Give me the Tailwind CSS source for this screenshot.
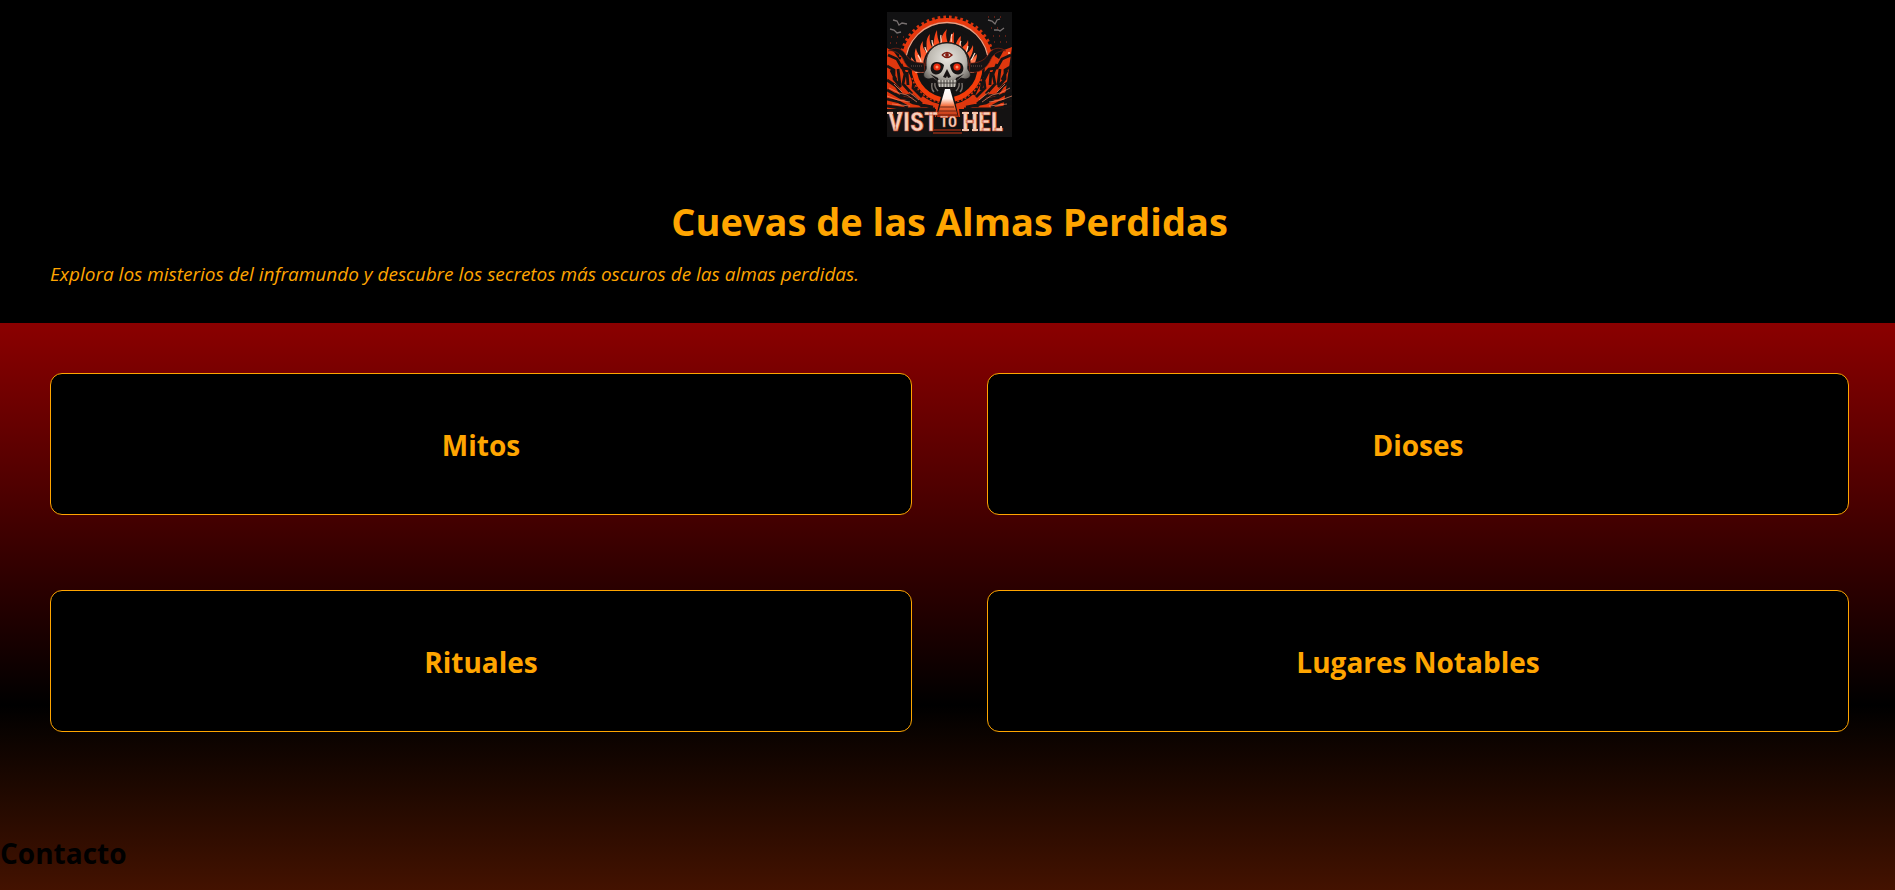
<!DOCTYPE html>
<html lang="es">
<head>
<meta charset="utf-8">
<meta name="viewport" content="width=device-width, initial-scale=1">
<title>Cuevas de las Almas Perdidas</title>
<script src="https://cdn.jsdelivr.net/npm/@tailwindcss/browser@4"></script>
</head>
<body class="flex min-h-screen flex-col bg-black font-['Segoe_UI','Open_Sans',sans-serif] text-black">
<header class="bg-black pt-3 pr-[46px] pb-[34px] pl-[50px] text-[orange]">
  <svg class="mx-auto block size-[125px]" viewBox="0 0 125 125" role="img" aria-label="Vist to Hel">
    <defs>
      <linearGradient id="beam" x1="0" y1="0" x2="0" y2="1"><stop offset="0" stop-color="#fff"/><stop offset=".35" stop-color="#fff0e8"/><stop offset=".6" stop-color="#f4703f"/><stop offset="1" stop-color="#b92b0b"/></linearGradient>
      <radialGradient id="bone" cx=".5" cy=".35" r=".65"><stop offset="0" stop-color="#e8e6e0"/><stop offset=".6" stop-color="#bcb8b0"/><stop offset="1" stop-color="#5f5b56"/></radialGradient>
      <linearGradient id="fire" x1="0" y1="0" x2="0" y2="1"><stop offset="0" stop-color="#f03a10"/><stop offset=".6" stop-color="#ff5a2c"/><stop offset="1" stop-color="#ffc4a4"/></linearGradient>
      <clipPath id="frame"><rect width="125" height="125"/></clipPath>
    </defs>
    <g clip-path="url(#frame)">
      <rect width="125" height="125" fill="#121213"/>
      <circle cx="60" cy="52" r="46" fill="none" stroke="#d8340d" stroke-width="5" stroke-dasharray="2.600 3"/>
      <circle cx="60" cy="52" r="44" fill="none" stroke="#e8380d" stroke-width="4"/>
      <circle cx="60" cy="52" r="41.500" fill="#131212" stroke="#f0a084" stroke-width="1.300"/>
      <!-- mountains -->
      <path fill="#df370e" d="M0 36l7 4 6 8 4-6 8 8 5 7 6 13 7 14 14 9v12H0zM125 35l-8 3-5 9-6-4-8 10-6 7-7 14-9 10-12 9v12h51z"/>
      <g fill="none" stroke="#171313" stroke-width="2.800">
        <path d="M1 43l9 4 5 9 8 1 7 8M0 54l7 4v9l7 8M14 52l4 10-2 10 9 10M0 68l9 6 6 9 11 1 9 8M22 58l5 10-1 8 9 9M0 78l14 8 11 1 10 7M0 87l12 3 9 5M4 58l5 10M11 57l2 16M20 60l1 13M28 66l2 12M33 74l4 9M0 94l20 3 28 0M8 82l18 9 20 4"/>
        <path d="M124 43l-9 4-5 9-8 1-7 8M125 54l-7 4v9l-7 8M110 52l-4 10 2 10-9 10M125 68l-9 6-6 9-11 1-9 8M102 58l-5 10 1 8-9 9M125 78l-14 8-11 1-10 7M125 87l-12 3-9 5M120 58l-5 10M113 57l-2 16M104 60l-1 13M96 66l-2 12M91 74l-4 9M125 94l-20 3-28 0M117 82l-18 9-20 4"/>
      </g>
      <g fill="none" stroke="#f38b69" stroke-width=".7">
        <path d="M2 76l10 5 8 2 10 7M0 84l11 4 12 2M7 72l8 8M22 80l10 8M5 92l18 2M123 76l-10 5-8 2-10 7M125 84l-11 4-12 2M118 72l-8 8M102 80l-10 8M120 92l-18 2"/>
      </g>
      <!-- lower glow and flames around the skull -->
      <circle cx="60" cy="55" r="38" fill="#131212"/>
      <path fill="none" stroke="#f33c0a" stroke-width="5" d="M27 55a33 33 0 0 0 66 0"/>
      <path fill="none" stroke="#d2350f" stroke-width="1.500" stroke-dasharray="2 2" d="M25 66a37 37 0 0 0 70 0"/>
      <path fill="url(#fire)" d="M29 61c-7-5-4-10-5-16 3 3 4 6 6 8-1-6-4-10-1-17 1 5 3 7 5 10 0-7-3-11 2-17-1 6 1 8 3 11 2-5-2-12 4-18-1 6 0 9 2 13 3-5 1-10 5-17 0 6 1 10 3 14 1-5 2-10 7-15-2 7 0 10 1 15 3-4 2-8 6-12 0 6-1 9 1 14 2-5 3-8 6-10-1 5 0 8 1 12 2-3 5-4 6-8 1 6-1 9-1 13 3-2 4-4 6-8 1 8-3 11-4 16 3-2 5-4 8-7 0 7-4 9-3 19z"/>
      <path fill="none" stroke="#ffe1cc" stroke-width="1.200" d="M31 43c1 3 3 4 3 7M38 35c0 4 3 5 3 8M45 28c0 5 2 6 2 9M54 23c-1 4 1 6 0 8M65 22c-2 4 0 6-1 8M74 29c-2 3 0 6-2 8M81 34c-1 4-1 6-3 7M88 41c-2 3-2 5-4 7"/>
      <circle cx="60" cy="54" r="24" fill="#181515"/>
      <path fill="none" stroke="#8d2a18" stroke-width="1" d="M38 54a22 22 0 0 1 44 0"/>
      <!-- horns -->
      <g fill="#161314" stroke="#8a2512" stroke-width=".7">
        <path d="M38 60c-9 2-18-3-22-13-3-6-9-9-15-8 7-5 14-3 18 4 4 6 10 8 18 8z"/>
        <path d="M82 60c9 2 18-3 22-13 3-6 9-9 15-8-7-5-14-3-18 4-4 6-10 8-18 8z"/>
      </g>
      <path stroke="#4d3a36" stroke-width="2" stroke-dasharray=".8 1.200" d="M24 54h12M84 54h12"/>
      <!-- bats and embers -->
      <path fill="none" stroke="#777070" stroke-width="1.300" d="M6 8l4 1 2 4 3-2 5 1M3 17l4 1 3 3 4-1M101 8l4 1 3 3 2-4 3-1M107 18l4 0 2 1 4-3"/>
      <path fill="none" stroke="#ae2d18" stroke-width="1.200" stroke-dasharray="1 5" d="M4 25h16M3 31h12M104 16h7M106 24h16M107 30h16M101 5h15"/>
      <circle cx="122" cy="41" r="1" fill="#ffc19c"/>
      <!-- skull -->
      <path fill="url(#bone)" stroke="#151313" stroke-width=".8" d="M60 31c-13 0-21 9-21 20 0 4 1 6-1 8-3 4-1 8 4 8l4-1 4 3 1 6h18l1-6 4-3 4 1c5 0 7-4 4-8-2-2-1-4-1-8 0-11-8-20-21-20z"/>
      <path fill="#171313" d="M44 54c2-6 10-4 13-1-1 7-5 11-10 9-3-1-4-5-3-8zM76 54c-2-6-10-4-13-1 1 7 5 11 10 9 3-1 4-5 3-8zM60 57l4 8-3 1-1-2-1 2-3-1zM43 62l8 4 1 4zM77 62l-8 4-1 4z"/>
      <circle cx="50" cy="55" r="3.600" fill="#e92a0c"/><circle cx="50" cy="55" r="1.500" fill="#ff9068"/>
      <circle cx="70" cy="55" r="3.600" fill="#e92a0c"/><circle cx="70" cy="55" r="1.500" fill="#ff9068"/>
      <path fill="none" stroke="#7c1a10" stroke-width="1.400" d="M55 43q5-5 10 0q-5 5-10 0"/><circle cx="60" cy="43" r="1.900" fill="#87180e"/>
      <path fill="#c5c1b9" d="M51 68h18l-1 7H52z"/>
      <path fill="none" stroke="#37312f" stroke-width=".9" d="M54 68v7M57 68v7M60 68v7M63 68v7M66 68v7M51 71h18"/>
      <path fill="none" stroke="#756e69" stroke-width="1.500" d="M48 71q-1 4 3 8M45 71q-1 6 2 9M72 71q1 4-3 8M75 71q1 6-2 9"/>
      <!-- stairway -->
      <path fill="#111" d="M55 80L44 125h32L66 80z"/>
      <path fill="url(#beam)" d="M58 77h5l8 28H50z"/>
      <path stroke="#4c170d" stroke-width=".8" d="M53 95h14M52 99h17M51 103h19"/>
      <path d="M0 97h49l-3 23H0zM72 97h53v23H75z" fill="#141212"/>
      <path stroke="#ce3b18" stroke-width="1" d="M47 118h27M46 121h29"/>
      <g fill="#f6d0bc" stroke="#c74322" stroke-width=".5" font-family="'Liberation Sans Narrow','Roboto Condensed','Liberation Serif',serif" font-weight="700">
        <text x="1" y="119" font-size="26">VIST</text>
        <text x="75" y="119" font-size="26">HEL</text>
        <text x="53" y="115" font-size="15" stroke-width=".3">TO</text>
      </g>
      <!-- slab serifs of the lettering -->
      <path stroke="#f3c3ab" stroke-width="2" d="M0 101h6M10 101h5M75 101h7M75 118h7M85 101h6M85 118h6M114 114v5"/>
    </g>
  </svg>
  <h1 class="mt-[60px] text-center text-[38px] leading-[48px] font-bold">Cuevas de las Almas Perdidas</h1>
  <p class="mt-[14px] text-[19px] leading-[30px] italic">Explora los misterios del inframundo y descubre los secretos más oscuros de las almas perdidas.</p>
</header>
<main class="grow bg-[linear-gradient(#8b0000_0,#000_382px,#8b2500_764px)]">
  <nav aria-label="Secciones" class="grid grid-cols-2 gap-[75px] pt-[50px] pr-[46px] pl-[50px] text-center text-[28px] leading-10 font-bold text-[orange]">
    <a href="#mitos" class="rounded-xl border border-[orange] bg-black pt-[51px] pb-[49px]"><h2>Mitos</h2></a>
    <a href="#dioses" class="rounded-xl border border-[orange] bg-black pt-[51px] pb-[49px]"><h2>Dioses</h2></a>
    <a href="#rituales" class="rounded-xl border border-[orange] bg-black pt-[51px] pb-[49px]"><h2>Rituales</h2></a>
    <a href="#lugares" class="rounded-xl border border-[orange] bg-black pt-[51px] pb-[49px]"><h2>Lugares Notables</h2></a>
  </nav>
  <h2 class="mt-[101px] text-[28px] leading-10 font-bold">Contacto</h2>
</main>
</body>
</html>
